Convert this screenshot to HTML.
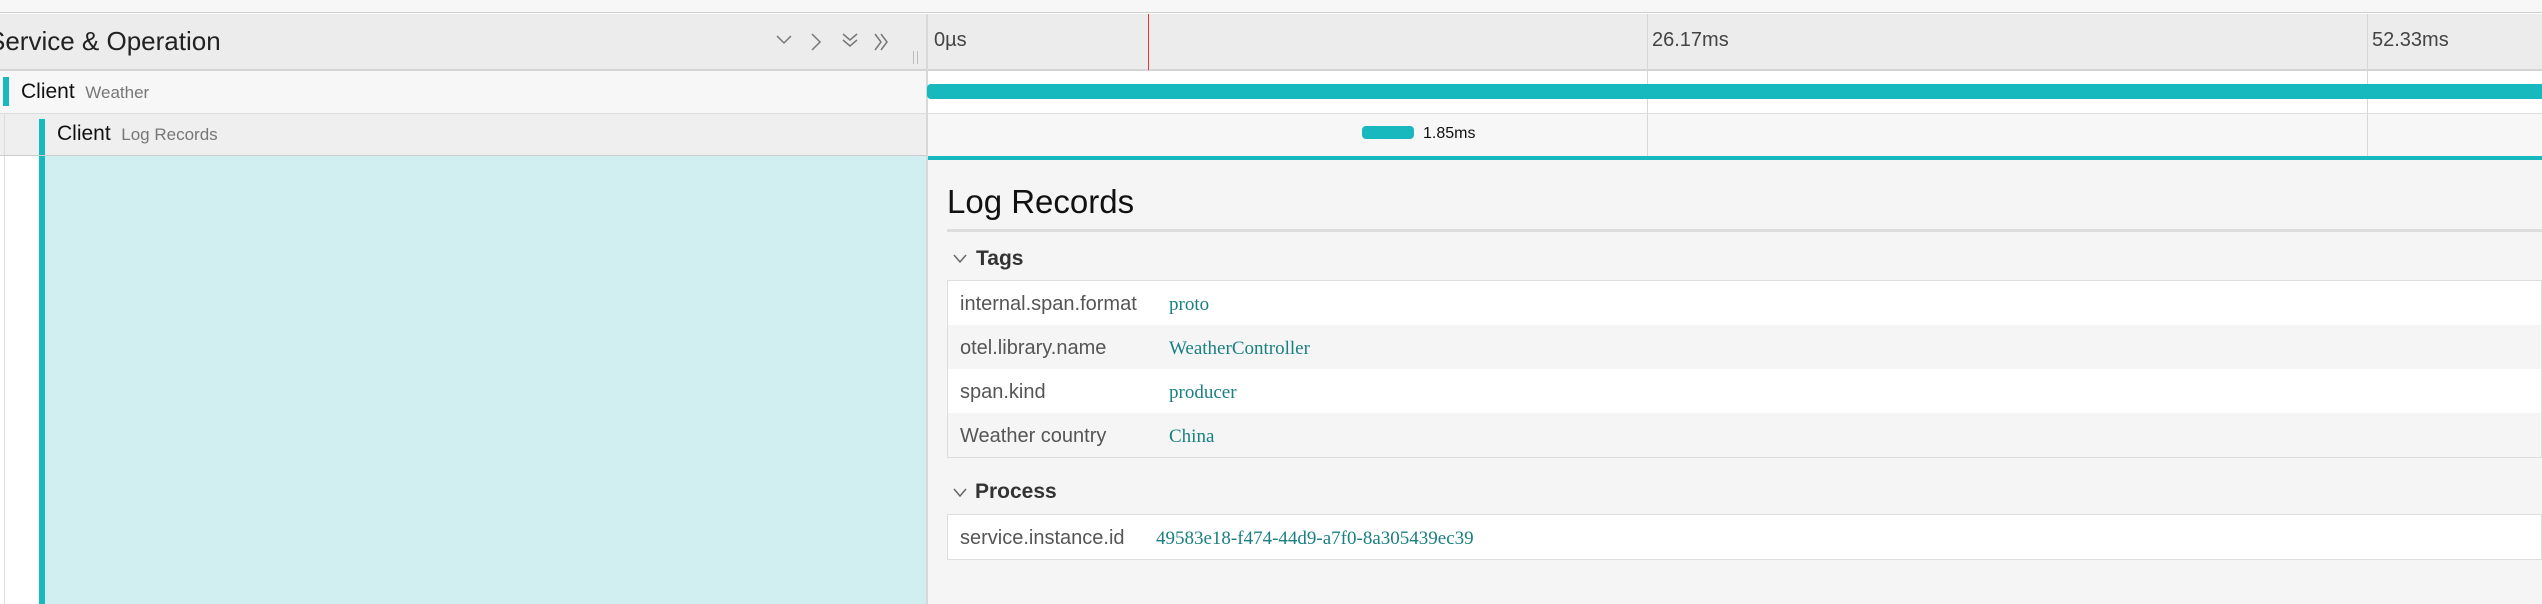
<!DOCTYPE html><html><head><style>
*{margin:0;padding:0;box-sizing:border-box}
body{width:2542px;height:604px;overflow:hidden;background:#fff;font-family:"Liberation Sans",sans-serif;position:relative}
.a{position:absolute}
.mono{font-family:"Liberation Serif","Noto Serif CJK SC",serif;color:#1a7f80;font-size:19px}
.k{color:#555;font-size:20px}
</style></head><body>
<div class="a" style="left:0;top:0;width:2542px;height:13px;background:#f7f7f7;border-bottom:1px solid #d0d0d0"></div>
<div class="a" style="left:0;top:14px;width:2542px;height:57px;background:#ececec;border-bottom:2px solid #d4d4d4"></div>
<div class="a" style="left:-12px;top:26px;font-size:26px;color:#222">Service &amp; Operation</div>
<svg class="a" style="left:770px;top:30px" width="130" height="24" fill="none" stroke="#777" stroke-width="1.5">
<path d="M7 6l7 7 7-7"/><path d="M42 4l8 8-8 8"/><path d="M73 4l7 6 7-6M73 10l7 6 7-6"/><path d="M105 4l6 8-6 8M111 4l6 8-6 8"/></svg>
<div class="a" style="left:913px;top:51px;width:5px;height:13px;border-left:1px solid #bbb;border-right:1px solid #bbb"></div>
<div class="a" style="left:926px;top:14px;width:2px;height:590px;background:#d8d8d8"></div>
<div class="a" style="left:934px;top:29px;font-size:20px;color:#444">0µs</div>
<div class="a" style="left:1148px;top:14px;width:1px;height:56px;background:#e33"></div>
<div class="a" style="left:1647px;top:14px;width:1px;height:142px;background:#d8d8d8"></div>
<div class="a" style="left:1652px;top:29px;font-size:20px;color:#444">26.17ms</div>
<div class="a" style="left:2367px;top:14px;width:1px;height:142px;background:#d8d8d8"></div>
<div class="a" style="left:2372px;top:29px;font-size:20px;color:#444">52.33ms</div>
<!-- row1 -->
<div class="a" style="left:0;top:71px;width:926px;height:42px;background:#f7f7f7"></div>
<div class="a" style="left:0;top:113px;width:2542px;height:1px;background:#ddd"></div>
<div class="a" style="left:3px;top:77px;width:6px;height:29px;background:#17b8be"></div>
<div class="a" style="left:21px;top:80px;font-size:21px;color:#111">Client <span style="font-size:17px;color:#777">&nbsp;Weather</span></div>
<div class="a" style="left:927px;top:84px;width:1615px;height:15px;background:#17b8be;border-radius:4px 0 0 4px"></div>
<!-- row2 -->
<div class="a" style="left:0;top:114px;width:926px;height:42px;background:#efefef"></div>
<div class="a" style="left:928px;top:114px;width:1614px;height:42px;background:#f7f7f7"></div>
<div class="a" style="left:1647px;top:114px;width:1px;height:42px;background:#d8d8d8"></div>
<div class="a" style="left:2367px;top:114px;width:1px;height:42px;background:#d8d8d8"></div>
<div class="a" style="left:4px;top:114px;width:1px;height:490px;background:#ddd"></div>
<div class="a" style="left:39px;top:119px;width:6px;height:485px;background:#17b8be"></div>
<div class="a" style="left:57px;top:122px;font-size:21px;color:#111">Client <span style="font-size:17px;color:#777">&nbsp;Log Records</span></div>
<div class="a" style="left:1362px;top:126px;width:52px;height:13px;background:#17b8be;border-radius:4px"></div>
<div class="a" style="left:1423px;top:125px;font-size:16px;color:#111">1.85ms</div>
<div class="a" style="left:0;top:155px;width:926px;height:1px;background:#ccc"></div>
<div class="a" style="left:45px;top:156px;width:881px;height:448px;background:#d1eff1"></div>
<!-- detail -->
<div class="a" style="left:928px;top:156px;width:1614px;height:448px;background:#f5f5f5;border-top:4px solid #17b8be"></div>
<div class="a" style="left:947px;top:183px;font-size:33px;color:#111">Log Records</div>
<div class="a" style="left:947px;top:229px;width:1595px;height:3px;background:#ddd"></div>
<svg class="a" style="left:952px;top:252px" width="16" height="12" fill="none" stroke="#666" stroke-width="1.5"><path d="M2 3l6 7 6-7"/></svg>
<div class="a" style="left:976px;top:247px;font-size:21px;font-weight:bold;color:#333">Tags</div>
<div class="a" style="left:947px;top:280px;width:1595px;height:178px;border:1px solid #ddd;background:#fff">
<div style="height:44px;background:#fff;position:relative"><span class="a k" style="left:12px;top:12px">internal.span.format</span><span class="a mono" style="left:221px;top:13px">proto</span></div>
<div style="height:44px;background:#f5f5f5;position:relative"><span class="a k" style="left:12px;top:12px">otel.library.name</span><span class="a mono" style="left:221px;top:13px">WeatherController</span></div>
<div style="height:44px;background:#fff;position:relative"><span class="a k" style="left:12px;top:12px">span.kind</span><span class="a mono" style="left:221px;top:13px">producer</span></div>
<div style="height:44px;background:#f5f5f5;position:relative"><span class="a k" style="left:12px;top:12px">Weather country</span><span class="a mono" style="left:221px;top:13px">China</span></div>
</div>
<svg class="a" style="left:952px;top:486px" width="16" height="12" fill="none" stroke="#666" stroke-width="1.5"><path d="M2 3l6 7 6-7"/></svg>
<div class="a" style="left:975px;top:480px;font-size:21px;font-weight:bold;color:#333">Process</div>
<div class="a" style="left:947px;top:514px;width:1595px;height:46px;border:1px solid #ddd;background:#fff">
<span class="a k" style="left:12px;top:12px">service.instance.id</span><span class="a mono" style="left:208px;top:13px">49583e18-f474-44d9-a7f0-8a305439ec39</span></div>
</body></html>
